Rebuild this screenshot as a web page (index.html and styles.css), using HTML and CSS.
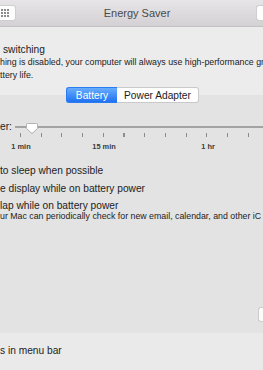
FILE: index.html
```html
<!DOCTYPE html>
<html lang="en">
<head>
    <meta charset="UTF-8">
    <title>Energy Saver</title>
    <link rel="stylesheet" href="styles.css">
</head>
<body>
<div class="window">
    <div class="titlebar">
        <div class="tb-btn grid-btn">
            <svg width="10" height="9" viewBox="0 0 10 9">
                <rect x="0" y="0" width="2" height="2"/><rect x="3" y="0" width="2" height="2"/><rect x="6" y="0" width="2" height="2"/>
                <rect x="0" y="3" width="2" height="2"/><rect x="3" y="3" width="2" height="2"/><rect x="6" y="3" width="2" height="2"/>
                <rect x="0" y="6" width="2" height="2"/><rect x="3" y="6" width="2" height="2"/><rect x="6" y="6" width="2" height="2"/>
            </svg>
        </div>
        <div class="title">Energy Saver</div>
        <div class="tb-btn search-btn"></div>
    </div>

    <div class="top">
        <div class="label">switching</div>
        <div class="note">hing is disabled, your computer will always use high-performance gr</div>
        <div class="note">ttery life.</div>
    </div>

    <div class="seg">
        <a href="javascript://" class="cur">Battery</a>
        <a href="javascript://">Power Adapter</a>
    </div>

    <div class="box">
        <div class="slider-row">
            <span class="label">er:</span>
            <div class="track">
                <svg class="knob" width="12" height="11" viewBox="0 0 12 11">
                    <path d="M1.5 0.5h9a1 1 0 0 1 1 1v4l-5.5 5l-5.5-5v-4a1 1 0 0 1 1-1z" fill="#fff" stroke="#b4b4b4"/>
                </svg>
            </div>
        </div>
        <div class="ticks"></div>
        <div class="scale">
            <span class="s1">1 min</span>
            <span class="s2">15 min</span>
            <span class="s3">1 hr</span>
        </div>
        <div class="row">to sleep when possible</div>
        <div class="row">e display while on battery power</div>
        <div class="row">lap while on battery power</div>
        <div class="note small">ur Mac can periodically check for new email, calendar, and other iC</div>
        <div class="box-foot">
            <div class="btn"></div>
        </div>
    </div>

    <div class="bottom">
        <div class="label">s in menu bar</div>
    </div>
</div>
</body>
</html>
```
FILE: styles.css
```css
html,body,div,span,a,svg{
    margin: 0;
    padding: 0;
}
body{
    width: 263px;
    height: 370px;
    overflow: hidden;
    background-color: #eaeaea;
    font-family: "Liberation Sans", Arial, sans-serif;
    color: #222;
}
.window{
    width: 263px;
    height: 370px;
    overflow: hidden;
    background-color: #ececec;
}
.titlebar{
    height: 26px;
    border-bottom: 1px solid #c2c2c2;
    background: linear-gradient(#e7e5e7, #d3d1d3);
    display: flex;
    align-items: center;
    justify-content: space-between;
}
.tb-btn{
    height: 16px;
    background-color: #fdfdfd;
    border: 1px solid #cfcfcf;
    border-radius: 3px;
    box-sizing: border-box;
}
.grid-btn{
    width: 17px;
    margin-left: -1px;
    border-left: none;
    border-radius: 0 3px 3px 0;
    display: flex;
    align-items: center;
    padding-left: 2px;
}
.grid-btn svg{
    fill: #8a8a8a;
}
.search-btn{
    width: 9px;
    margin-right: -2px;
    border-right: none;
    border-radius: 3px 0 0 3px;
}
.title{
    font-size: 11px;
    color: #4a4a4a;
    padding-left: 2px;
}
.label{
    font-size: 10.2px;
    line-height: 12px;
    white-space: nowrap;
}
.note{
    font-size: 8.8px;
    line-height: 12.6px;
    white-space: nowrap;
}
.top{
    padding: 17px 0 0 3px;
}
.top .note{
    margin-left: -3px;
}
.seg{
    display: flex;
    justify-content: center;
    padding-left: 2px;
    margin-top: 6px;
    margin-bottom: -8px;
    position: relative;
}
.seg a{
    display: block;
    height: 16px;
    line-height: 15px;
    box-sizing: border-box;
    font-size: 10.2px;
    text-decoration: none;
    color: #1c1c1c;
    text-align: center;
    background-color: #fff;
    border: 1px solid #c9c9c9;
}
.seg a:first-child{
    width: 51px;
    border-radius: 3px 0 0 3px;
    border-right: none;
}
.seg a:last-child{
    width: 82px;
    border-radius: 0 3px 3px 0;
    border-left: none;
}
.seg a.cur{
    color: #fff;
    border-color: #2a7cf3;
    background: linear-gradient(#68adfd, #1f71f2);
}
.box{
    height: 238px;
    background-color: #e3e3e3;
    padding-top: 26px;
    box-sizing: border-box;
    display: flex;
    flex-direction: column;
}
.slider-row{
    display: flex;
    align-items: center;
    height: 12px;
}
.track{
    flex: 1;
    height: 2px;
    margin-left: 3px;
    background-color: #a3a3a3;
    position: relative;
}
.knob{
    position: absolute;
    left: 11px;
    top: -3px;
    filter: drop-shadow(0 0.5px 0.5px rgba(0,0,0,0.2));
}
.ticks{
    height: 4px;
    margin-left: 20px;
    background-image: repeating-linear-gradient(to right, #8c8c8c 0 1px, transparent 1px 20.7px);
}
.scale{
    display: flex;
    margin-top: 5px;
    font-size: 7.4px;
    font-weight: bold;
    line-height: 10px;
    color: #3a3a3a;
    white-space: nowrap;
}
.scale span{
    display: block;
    width: 40px;
    text-align: center;
}
.s1{
    margin-left: 1px;
}
.s2{
    margin-left: 43px;
}
.s3{
    margin-left: 64px;
}
.row{
    font-size: 10.2px;
    line-height: 13px;
    margin-top: 4.5px;
    white-space: nowrap;
}
.scale + .row{
    margin-top: 12px;
}
.note.small{
    line-height: 10px;
    margin-top: -1px;
}
.box-foot{
    margin-top: auto;
    display: flex;
    justify-content: flex-end;
    padding-bottom: 11px;
}
.btn{
    width: 5px;
    height: 15px;
    background-color: #fbfbfb;
    border: 1px solid #cdcdcd;
    border-right: none;
    border-radius: 3px 0 0 3px;
    box-sizing: border-box;
}
.bottom{
    background-color: #eaeaea;
    padding-top: 12px;
    height: 40px;
}
```
